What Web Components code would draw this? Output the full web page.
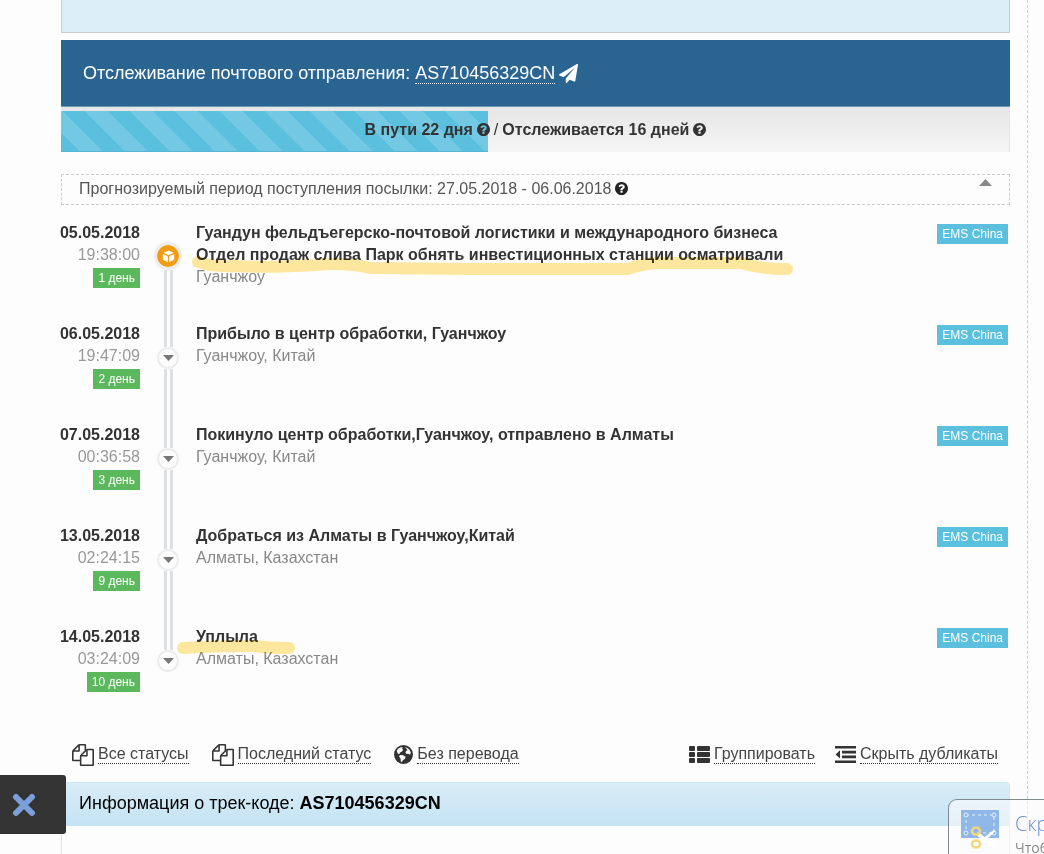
<!DOCTYPE html>
<html lang="ru">
<head>
<meta charset="utf-8">
<title>Отслеживание почтового отправления</title>
<style>
body{margin:0;background:#fdfdfd;font-family:"Liberation Sans",Arial,sans-serif;font-size:16px;line-height:22px;color:#333}
</style>
</head>
<body>
<track-page></track-page>
<close-tab></close-tab>
<snip-notice></snip-notice>
<script>
const icons = {
  question: '<svg viewBox="128 128 1536 1536"><path d="M1024 1376v-192q0-14-9-23t-23-9h-192q-14 0-23 9t-9 23v192q0 14 9 23t23 9h192q14 0 23-9t9-23zm256-672q0-88-55.5-163t-138.5-116-170-41q-243 0-371 213-15 24 8 42l132 100q7 6 19 6 16 0 25-12 53-68 86-92 34-24 86-24 48 0 85.5 26t37.5 59q0 38-20 61t-68 45q-63 28-115.5 86.5t-52.5 125.5v36q0 14 9 23t23 9h192q14 0 23-9t9-23q0-19 21.5-49.5t54.5-49.5q32-18 49-28.5t46-35 44.5-48 28-60.5 12.5-81zm384 192q0 209-103 385.5t-279.5 279.5-385.5 103-385.5-103-279.5-279.5-103-385.5 103-385.5 279.5-279.5 385.5-103 385.5 103 279.5 279.5 103 385.5z"/></svg>',
  plane: '<svg viewBox="0 0 1792 1792"><path d="M1764 11q33 24 27 64l-256 1536q-5 29-32 45-14 8-31 8-11 0-24-5l-453-185-242 295q-18 23-49 23-13 0-22-4-19-7-30.5-23.5t-11.5-36.5v-349l864-1059-1069 925-395-162q-37-14-40-55-2-40 32-59l1664-960q15-9 32-9 20 0 36 11z"/></svg>',
  files: '<svg viewBox="0 0 1792 1792"><path d="M1696 384q40 0 68 28t28 68v1216q0 40-28 68t-68 28h-960q-40 0-68-28t-28-68v-288h-544q-40 0-68-28t-28-68v-672q0-40 20-88t48-76l408-408q28-28 76-48t88-20h416q40 0 68 28t28 68v328q68-40 128-40h416zm-544 213l-299 299h299v-299zm-640-384l-299 299h299v-299zm196 647l316-316v-416h-384v416q0 40-28 68t-68 28h-416v640h512v-256q0-40 20-88t48-76zm956 804v-1152h-384v416q0 40-28 68t-68 28h-416v640h896z"/></svg>',
  globe: '<svg viewBox="0 0 18 18"><circle cx="9" cy="9" r="9"/><path fill="#fdfdfd" d="M2.6 5.2 4.4 3 6.6 2.2 8.4 2.4 7.6 3.6 8.6 4.8 7.2 6.4 5.6 7 5.2 8.6 3.6 8.4zM5.6 9.400 8.6 9.6 11 11.2 10.2 13.2 8.4 14.400 7.6 16.2 6.400 15.6 6.2 12.8 4.8 11zM10.400 2 13 3 15 5 16 7.4 15 9.2 13.6 8.2 12 8.6 10.8 7.2 11.600 5.4 13 5z"/></svg>',
  list: '<svg viewBox="0 0 21 17"><path d="M1 0h4q1 0 1 1v3q0 1-1 1H1Q0 5 0 4V1q0-1 1-1zm0 6h4q1 0 1 1v3q0 1-1 1H1q-1 0-1-1V7q0-1 1-1zm0 6h4q1 0 1 1v3q0 1-1 1H1q-1 0-1-1v-3q0-1 1-1zM9 0h11q1 0 1 1v3q0 1-1 1H9Q8 5 8 4V1q0-1 1-1zm0 6h11q1 0 1 1v3q0 1-1 1H9q-1 0-1-1V7q0-1 1-1zm0 6h11q1 0 1 1v3q0 1-1 1H9q-1 0-1-1v-3q0-1 1-1z"/></svg>',
  outdent: '<svg viewBox="0 0 21 17"><path d="M0 0h21v2.600H0zM7 4.800H21v2.600H7zM7 9.600H21v2.600H7zM0 14.400h21V17H0zM5 4.200v8.400L.6 8.500z"/></svg>',
  box: '<svg viewBox="0 0 14 14"><path fill="#fff" d="M7 .6 12.4 3 7 5.6 1.6 3zM.9 4.2 6.4 6.7v6.5L.9 10.4zM13.1 4.2 7.6 6.7v6.5l5.5-2.8z"/></svg>'
};
function define(name, css, html) {
  customElements.define(name, class extends HTMLElement {
    constructor() {
      super();
      const a = k => this.getAttribute(k) || '';
      this.attachShadow({mode: 'open'}).innerHTML =
        `<style>*{box-sizing:border-box}${css}</style>` + (typeof html === 'function' ? html(a) : html);
    }
  });
}

define('ui-icon', `
:host{display:inline-block;width:13px;height:13px;flex:none}
svg{display:block;width:100%;height:100%;fill:currentColor}`,
a => icons[a('name')]);

define('track-header', `
:host{display:flex;align-items:center;box-sizing:border-box;height:67px;padding:0 22px;background:#2a6592;border-bottom:1px solid #6d97b6;color:#fff}
h1{margin:0;font-size:18px;line-height:22px;font-weight:400}
a{color:inherit;text-decoration:none;border-bottom:1px dotted #fff}
ui-icon{width:19px;height:19px;margin-left:4px}`,
`<h1><slot></slot> <a href="#track"><slot name="code"></slot></a></h1><ui-icon name="plane"></ui-icon>`);

define('travel-progress', `
:host{display:grid;box-sizing:border-box;height:45px;padding-top:4px;background:linear-gradient(#e6e6e6,#f5f5f5);box-shadow:inset -1px 0 #e6e6e6}
.bar,.label{grid-area:1/1}
.bar{width:45%;background:#5bc0de linear-gradient(45deg,rgba(255,255,255,.15) 25%,transparent 25%,transparent 50%,rgba(255,255,255,.15) 50%,rgba(255,255,255,.15) 75%,transparent 75%) 24px 0/45px 45px;box-shadow:inset 0 -1px #55b5d2}
.label{display:flex;justify-content:center;align-items:center;gap:4px;padding-bottom:4px;z-index:1}`,
`<div class="bar"></div><div class="label"><b>В пути 22 дня</b><ui-icon name="question"></ui-icon><span>/</span><b>Отслеживается 16 дней</b><ui-icon name="question"></ui-icon></div>`);

define('forecast-bar', `
:host{display:flex;box-sizing:border-box;height:31px;margin-top:22px;padding:0 17px 2px 17px;border:1px dashed #ccc;align-items:center;gap:4px;color:#555}
ui-icon{color:#222}
button{margin-left:auto;padding:0;border:0;background:none;width:13px;height:19px;display:flex}
svg{width:13px;height:7px}`,
`<span><slot></slot></span><ui-icon name="question"></ui-icon><button aria-label="Свернуть"><svg viewBox="0 0 13 7"><path fill="#888" d="M6.5 0 13 7H0z"/></svg></button>`);

define('track-event', `
:host{display:grid;grid-template-columns:79px 28px 1fr auto;column-gap:14px;min-height:101px}
.when{display:flex;flex-direction:column;align-items:flex-end;white-space:nowrap}
time{display:contents}
.clock{color:#999}
.tag{font-size:12px;line-height:20px;padding:0 5px;color:#fff}
.days{background:#5cb85c;margin-top:2px}
.firm{background:#5bc0de;margin:2px 2px 0 0;align-self:start}
.rail{display:flex;flex-direction:column;align-items:center}
.line{width:9px;border:solid #dde1e4;border-width:0 3px;flex:1}
.line.up{flex:none;height:24px}
:host([first]) .up{height:20px}
:host([first]) .up,:host([last]) .down{visibility:hidden}
.dot{flex:none;width:22px;height:22px;border-radius:50%;border:2px solid #ececec;background:#fdfdfd;display:flex;align-items:center;justify-content:center}
.dot svg{width:11px;height:6px}
:host([first]) .dot{width:28px;height:28px;border-width:3px;background:#f39c12 padding-box}
.text{position:relative}
h3{margin:0;font-size:16px;line-height:22px}
.place{color:#888}
::slotted(svg){position:absolute;left:-20px;top:0;overflow:visible;mix-blend-mode:multiply;pointer-events:none}`,
a => `<div class="when"><time><b>${a('date')}</b><span class="clock">${a('time')}</span></time><span class="tag days">${a('day')} день</span></div>
<div class="rail"><i class="line up"></i><span class="dot">${a('kind') ? '<ui-icon name="box"></ui-icon>' : '<svg viewBox="0 0 11 6"><path fill="#777" d="M0 0h11L5.5 6z"/></svg>'}</span><i class="line down"></i></div>
<div class="text"><h3><slot></slot></h3><div class="place">${a('place')}</div><slot name="mark"></slot></div>
<span class="tag firm">EMS China</span>`);

define('tool-link', `
:host{display:flex;align-items:center;gap:4px;color:#333}
a{color:#444;text-decoration:none;line-height:18px;border-bottom:1px dotted #333}
ui-icon{width:22px;height:22px}
:host([icon=globe]) ui-icon{width:19px;height:19px}
:host([icon=list]) ui-icon,:host([icon=outdent]) ui-icon{width:21px;height:17px}`,
a => `<ui-icon name="${a('icon')}"></ui-icon><a href="#${a('icon')}"><slot></slot></a>`);

define('track-toolbar', `
:host{display:flex;box-sizing:border-box;align-items:center;height:55px;padding:0 12px 0 11px;white-space:nowrap}
nav{display:flex;gap:23px}
nav+nav{margin-left:auto;gap:20px}`,
`<nav><slot></slot></nav><nav><slot name="end"></slot></nav>`);

define('track-info', `
:host{display:flex;flex-direction:column;flex:1;border:solid #c9eaf5;border-width:0 1px;border-radius:4px 4px 0 0}
h2{margin:0;padding:0 17px;font-size:18px;line-height:40px;font-weight:400;color:#000;height:44px;background:linear-gradient(#d9edf7,#c4e3f3);border-top:1px solid #c9eaf5;border-radius:4px 4px 0 0}`,
`<h2><slot></slot></h2>`);

define('track-page', `
:host{display:block;min-height:100vh;padding:0 16px 0 61px}
main{display:flex;flex-direction:column;min-height:100vh;padding-right:17px;border-right:1px dashed #ccc}
.notice{height:33px;margin-bottom:7px;background:#dceef6;border:1px solid #ccc;border-top:0}
.events{margin-top:17px}`,
`<main>
<div class="notice"></div>
<track-header>Отслеживание почтового отправления:<span slot="code">AS710456329CN</span></track-header>
<travel-progress></travel-progress>
<forecast-bar>Прогнозируемый период поступления посылки: 27.05.2018 - 06.06.2018</forecast-bar>
<section class="events">
<track-event first kind="box" date="05.05.2018" time="19:38:00" day="1" place="Гуанчжоу">Гуандун фельдъегерско-почтовой логистики и международного бизнеса<br>Отдел продаж слива Парк обнять инвестиционных станции осматривали
<svg slot="mark" width="620" height="60" viewBox="0 0 620 60" fill="none" stroke="#ffe89e" stroke-width="12" stroke-linecap="round" stroke-linejoin="round"><path d="M22 40Q35 45 60 44Q90 46 140 43Q168 40 195 46L300 47H452Q470 40 490 41H565Q585 47 611 47"/></svg></track-event>
<track-event date="06.05.2018" time="19:47:09" day="2" place="Гуанчжоу, Китай">Прибыло в центр обработки, Гуанчжоу</track-event>
<track-event date="07.05.2018" time="00:36:58" day="3" place="Гуанчжоу, Китай">Покинуло центр обработки,Гуанчжоу, отправлено в Алматы</track-event>
<track-event date="13.05.2018" time="02:24:15" day="9" place="Алматы, Казахстан">Добраться из Алматы в Гуанчжоу,Китай</track-event>
<track-event last date="14.05.2018" time="03:24:09" day="10" place="Алматы, Казахстан">Уплыла
<svg slot="mark" width="130" height="40" viewBox="0 0 130 40" fill="none" stroke="#ffe89e" stroke-width="12" stroke-linecap="round"><path d="M7 22Q40 20 80 20Q90 22 113 22"/></svg></track-event>
</section>
<track-toolbar>
<tool-link icon="files">Все статусы</tool-link>
<tool-link icon="files">Последний статус</tool-link>
<tool-link icon="globe">Без перевода</tool-link>
<tool-link slot="end" icon="list">Группировать</tool-link>
<tool-link slot="end" icon="outdent">Скрыть дубликаты</tool-link>
</track-toolbar>
<track-info>Информация о трек-коде: <b>AS710456329CN</b></track-info>
</main>`);

define('close-tab', `
:host{position:fixed;left:0;bottom:20px}
button{width:66px;height:59px;padding:0 0 0 12px;border:0;border-radius:0 3px 3px 0;background:#333;display:flex;align-items:center}
svg{width:24px;height:24px}`,
`<button aria-label="Закрыть"><svg viewBox="0 0 24 24"><path d="M4 4l16 16M20 4 4 20" stroke="#7b9fd8" stroke-width="6" stroke-linecap="round"/></svg></button>`);

define('snip-notice', `
:host{position:fixed;right:0;bottom:0;width:96px;height:55px;display:flex;overflow:hidden;padding:10px 0 0 12px;box-sizing:border-box;gap:16px;border:solid rgba(90,100,105,.75);border-width:1px 0 0 1px;border-radius:9px 0 0 0;background:rgba(252,252,252,.6);font-family:"Open Sans",sans-serif;white-space:nowrap}
svg{flex:none;width:38px;height:42px}
strong{display:block;font-weight:300;font-size:20px;line-height:28px;color:#6f8fd0}
span{display:block;font-size:14px;line-height:20px;color:#8a8a8a}`,
`<svg viewBox="0 0 38 42"><path fill="#8fb8e8" d="M0 0h38v28H0z"/><path d="M5 5h28v18H5z" fill="none" stroke="#e4f0fc" stroke-dasharray="3 3"/><g fill="#8fb8e8" stroke="#e4f0fc"><circle cx="5" cy="5" r="2"/><circle cx="33" cy="5" r="2"/><circle cx="5" cy="23" r="2"/><circle cx="33" cy="23" r="2"/></g><path d="M18 23 33 35 31 35 17 26zM18 32 32 21 34 21 21 33z" fill="#fff" stroke="#fff"/><g fill="none" stroke="#f4d879" stroke-width="2.5"><ellipse cx="15" cy="21" rx="4" ry="3.5"/><ellipse cx="15" cy="34" rx="4" ry="3.5"/></g></svg>
<div><strong>Скр</strong><span>Чтоб</span></div>`);
</script>
</body>
</html>
